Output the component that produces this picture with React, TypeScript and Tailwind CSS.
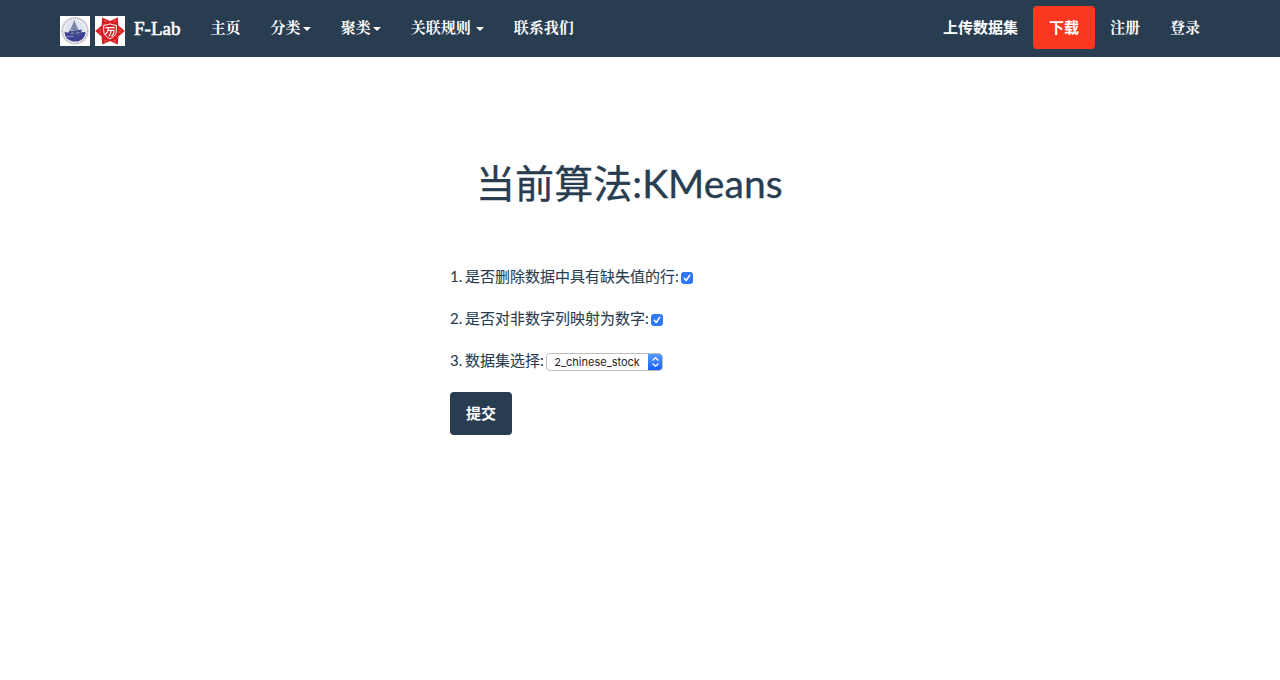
import type { ReactNode } from "react";

const serif = "font-['Liberation_Serif','Noto_Serif_CJK_SC','Noto_Sans_CJK_SC',serif]";
const sans = "font-['Lato','Noto_Sans_CJK_SC',sans-serif]";

function ShipSeal() {
  return (
    <svg width="30" height="30" viewBox="0 0 30 30" className="block">
      <rect width="30" height="30" fill="#fdfdfe" />
      <circle cx="15" cy="14.8" r="12.6" fill="none" stroke="#b4b5c3" strokeWidth="2" strokeDasharray="1.3 .6" />
      <circle cx="15" cy="14.8" r="10.8" fill="#dfe4ee" />
      <path d="M4.6 16l2.4.6 2.5-.4 2 1.4h8l2-1.4 4-.2c0 5.6-4.4 9.6-10.4 9.6S4.6 21.4 4.6 16z" fill="#3c4192" />
      <path d="M14 5l-4 9h4.4zM15 6.2l3.8 8.2H15z" fill="#8089ae" />
      <path d="M8.8 14.2l2.4.6 3.8-.4 7-.8-1.8 5.8H10z" fill="#444c8c" />
      <path d="M11 17.4l3-.6M16 17.2l3.4-.7M7 20l3.5.8 3-.5" fill="none" stroke="#a8adda" strokeWidth=".8" />
      <path d="M14.4 4.5v12" stroke="#51598d" strokeWidth=".7" />
    </svg>
  );
}

function StarSeal() {
  return (
    <svg width="30" height="30" viewBox="0 0 30 30" className="block">
      <rect width="30" height="30" fill="#fffdfd" />
      <path
        d="M7.2 1.6L15 5L22.8 1.6L23.4 9.4L29.8 15L23.4 20.6L22.8 28.4L15 25L7.2 28.4L6.6 20.6L.2 15L6.6 9.4z"
        fill="#d91c20"
      />
      <path d="M9 4.6l2.4 1M21 4.6l-2.4 1M3.4 15l2.4-2M4.4 16.8l1.6-1M26.6 15l-2.4-2M25.6 16.8l-1.6-1M9 25.4l2.4-1M21 25.4l-2.4-1" fill="none" stroke="#f09a9a" strokeWidth=".7" />
      <path d="M8.7 9.2q3.4.2 6.3-1.4 2.9 1.6 6.3 1.4v5.4c0 4.2-2.7 6.6-6.3 8.2-3.6-1.6-6.3-4-6.3-8.2z" fill="#d91c20" stroke="#fff" strokeWidth="1" />
      <path d="M10.4 11.6h9.2M13.2 11.6c0 3.8-.9 5.5-3 7M13 14.4h5.9c-.1 3.6-.8 5-2.5 5.8M16.1 14.4c-.1 2.5-.9 4.4-2.4 6.1" fill="none" stroke="#fff" strokeWidth="1.2" />
    </svg>
  );
}

function Caret({ spaced = false }: { spaced?: boolean }) {
  return (
    <span
      className={`relative -top-px inline-block border-x-4 border-t-4 border-x-transparent border-t-white align-middle ${spaced ? "ml-[5px]" : "ml-[2px]"}`}
    />
  );
}

function NavItem({ children }: { children: ReactNode }) {
  return (
    <a href="#" className={`block px-[15px] pt-[18px] text-[15px] leading-[21px] font-bold whitespace-nowrap ${serif}`}>
      {children}
    </a>
  );
}

function Check() {
  return (
    <label className="relative ml-[2px] block size-3">
      <input type="checkbox" defaultChecked className="block size-3 appearance-none rounded-[3px] bg-[#2f78f8]" />
      <svg viewBox="0 0 12 12" className="pointer-events-none absolute inset-0 size-3">
        <path d="M3.3 6.3l1.9 2.2 3.5-5.2" fill="none" stroke="#fff" strokeWidth="1.5" strokeLinecap="round" strokeLinejoin="round" />
      </svg>
    </label>
  );
}

export default function App() {
  return (
    <div className={`min-h-[680px] bg-white text-[15px] leading-[21px] text-[#293d51] ${sans}`}>
      <nav className="flex h-[57px] items-start justify-between bg-[#293d51] pr-[65px] pl-[60px] text-white">
        <div className="flex">
          <a href="#" className="flex pt-4">
            <ShipSeal />
            <span className="ml-[5px]">
              <StarSeal />
            </span>
            <span className={`mr-[15px] ml-[9px] w-[46.6px] pt-[2px] text-[19px] leading-[21px] whitespace-nowrap [-webkit-text-stroke:0.6px_white] ${serif}`}>
              F-Lab
            </span>
          </a>
          <NavItem>主页</NavItem>
          <NavItem>分类<Caret /></NavItem>
          <NavItem>聚类<Caret /></NavItem>
          <NavItem>关联规则<Caret spaced /></NavItem>
          <NavItem>联系我们</NavItem>
        </div>
        <div className="flex">
          <a href="#" className="px-[15px] pt-[17px] font-bold">上传数据集</a>
          <button className="mt-[6px] h-[43px] w-[62px] rounded bg-[#fa381f] font-bold">下载</button>
          <NavItem>注册</NavItem>
          <NavItem>登录</NavItem>
        </div>
      </nav>
      <main className="pl-[450px]">
        <h1 className="pt-[105px] pl-[26px] text-[39px] leading-[43px] font-normal tracking-[0.08px] whitespace-nowrap [-webkit-text-stroke:0.35px_#293d51]">当前算法:KMeans</h1>
        <form className="pt-[61px]" onSubmit={(e) => e.preventDefault()}>
          <div className="flex h-[42px] items-start whitespace-nowrap">
            <span className="[word-spacing:-1px] [-webkit-text-stroke:0.1px_#293d51]">1. 是否删除数据中具有缺失值的行:</span>
            <span className="pt-[6px]"><Check /></span>
          </div>
          <div className="flex h-[42px] items-start whitespace-nowrap">
            <span className="[word-spacing:-1px] [-webkit-text-stroke:0.1px_#293d51]">2. 是否对非数字列映射为数字:</span>
            <span className="pt-[6px]"><Check /></span>
          </div>
          <div className="flex h-[42px] items-start whitespace-nowrap">
            <span className="[word-spacing:-1px] [-webkit-text-stroke:0.1px_#293d51]">3. 数据集选择:</span>
            <button
              type="button"
              className="mt-[3px] ml-[2px] flex h-[18px] w-[117px] items-stretch overflow-hidden rounded border border-[#bdbdbd] bg-white text-[#222]"
            >
              <span className="flex-1 pl-[7.5px] text-left font-['Inter',sans-serif] text-[11px] leading-[17px]">2_chinese_stock</span>
              <span className="-my-px -mr-px flex w-[15px] items-center justify-center bg-linear-to-b from-[#5b9dfa] to-[#1259fa]">
                <svg width="9" height="12" viewBox="0 0 9 12">
                  <path d="M1.8 4.2l2.7-2.4 2.7 2.4M1.8 7.8l2.7 2.4 2.7-2.4" fill="none" stroke="#fff" strokeWidth="1.2" strokeLinecap="round" strokeLinejoin="round" />
                </svg>
              </span>
            </button>
          </div>
          <button type="submit" className="block h-[43px] w-[62px] rounded bg-[#293d51] font-bold text-white">提交</button>
        </form>
      </main>
    </div>
  );
}
